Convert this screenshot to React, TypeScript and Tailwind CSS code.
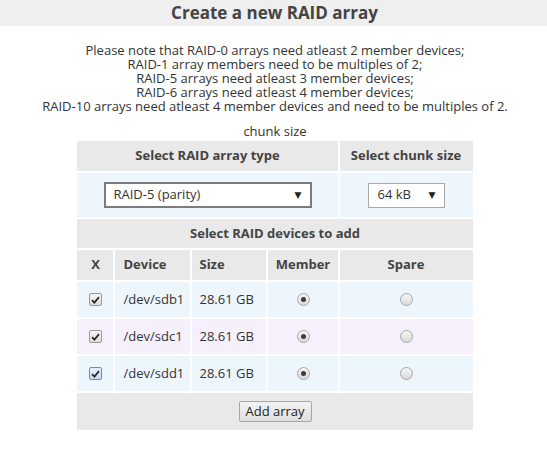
import React from "react";

const font = { fontFamily: '"Open Sans", "DejaVu Sans", sans-serif' };

function Check({ focused }: { focused?: boolean }) {
  return (
    <div
      className={
        "mx-auto w-[13px] h-[13px] rounded-[2px] border flex items-center justify-center " +
        (focused
          ? "border-[#5b8fd6] bg-gradient-to-b from-[#e6f0fb] to-[#c9dcf2]"
          : "border-[#9a9a9a] bg-gradient-to-b from-[#f8f8f8] to-[#dedede]")
      }
    >
      <svg width="9" height="8" viewBox="0 0 9 8">
        <path d="M1 4.2 L3.4 6.6 L8 1.2" stroke="#2b2b2b" strokeWidth="1.8" fill="none" />
      </svg>
    </div>
  );
}

function Radio({ checked }: { checked?: boolean }) {
  return (
    <div className="mx-auto w-[13px] h-[13px] rounded-full border border-[#a8a8a8] bg-gradient-to-b from-[#f6f6f6] to-[#dadada] flex items-center justify-center">
      {checked && <div className="w-[5px] h-[5px] rounded-full bg-[#3c3c3c]" />}
    </div>
  );
}

const rows = [
  { dev: "/dev/sdb1", bg: "bg-[#eef6fd]" },
  { dev: "/dev/sdc1", bg: "bg-[#f6effc]" },
  { dev: "/dev/sdd1", bg: "bg-[#eef6fd]", focused: true },
];

export default function App() {
  return (
    <div className="w-[547px] h-[450px] bg-white text-[#333] text-[13px]" style={font}>
      <div className="h-[26px] bg-[#efefef] text-center font-bold text-[17px] leading-[26px] text-[#444] pl-[2px]">
        Create a new RAID array
      </div>
      <div className="pl-[3px]">
        <div className="pt-[17px] text-center leading-[14px]">
          <div>Please note that RAID-0 arrays need atleast 2 member devices;</div>
          <div>RAID-1 array members need to be multiples of 2;</div>
          <div>RAID-5 arrays need atleast 3 member devices;</div>
          <div>RAID-6 arrays need atleast 4 member devices;</div>
          <div>RAID-10 arrays need atleast 4 member devices and need to be multiples of 2.</div>
        </div>
        <div className="mt-[11px] text-center leading-[14px]">chunk size</div>
        <table className="mx-auto mt-[1px] w-[399px] table-fixed border-separate border-spacing-[2px]">
          <colgroup>
            <col className="w-[36px]" />
            <col className="w-[75px]" />
            <col className="w-[74px]" />
            <col className="w-[69px]" />
            <col className="w-[133px]" />
          </colgroup>
          <tbody>
            <tr className="h-[30px] bg-[#e9e9e9] font-bold text-[#444]">
              <td colSpan={4} className="text-center p-0">Select RAID array type</td>
              <td className="text-center p-0">Select chunk size</td>
            </tr>
            <tr className="h-[44px] bg-[#eef6fd]">
              <td colSpan={4} className="p-0">
                <div className="mx-auto w-[208px] h-[26px] border-2 border-[#7c7c7c] bg-white flex items-center justify-between pl-[8px] pr-[8px]">
                  <span>RAID-5 (parity)</span>
                  <span className="text-[9px] text-[#222]">▼</span>
                </div>
              </td>
              <td className="p-0">
                <div className="mx-auto w-[77px] h-[25px] border border-[#a9a9a9] bg-white flex items-center justify-between pl-[9px] pr-[8px]">
                  <span>64 kB</span>
                  <span className="text-[9px] text-[#222]">▼</span>
                </div>
              </td>
            </tr>
            <tr className="h-[29px] bg-[#e9e9e9] font-bold text-[#444]">
              <td colSpan={5} className="text-center p-0">Select RAID devices to add</td>
            </tr>
            <tr className="h-[30px] bg-[#e9e9e9] font-bold text-[#444]">
              <td className="text-center p-0">X</td>
              <td className="pl-[8px] p-0">Device</td>
              <td className="pl-[7px] p-0">Size</td>
              <td className="text-center p-0">Member</td>
              <td className="text-center p-0">Spare</td>
            </tr>
            {rows.map((r) => (
              <tr key={r.dev} className={"h-[35px] " + r.bg}>
                <td className="p-0"><Check focused={r.focused} /></td>
                <td className="pl-[8px] p-0">{r.dev}</td>
                <td className="pl-[7px] p-0">28.61 GB</td>
                <td className="p-0"><Radio checked /></td>
                <td className="p-0"><Radio /></td>
              </tr>
            ))}
            <tr className="h-[37px] bg-[#e9e9e9]">
              <td colSpan={5} className="text-center p-0">
                <button className="w-[73px] h-[21px] border border-[#a6a6a6] rounded-[2px] bg-gradient-to-b from-[#f4f4f4] to-[#dedede] text-[13px] leading-[19px] text-[#222]">
                  Add array
                </button>
              </td>
            </tr>
          </tbody>
        </table>
      </div>
    </div>
  );
}
